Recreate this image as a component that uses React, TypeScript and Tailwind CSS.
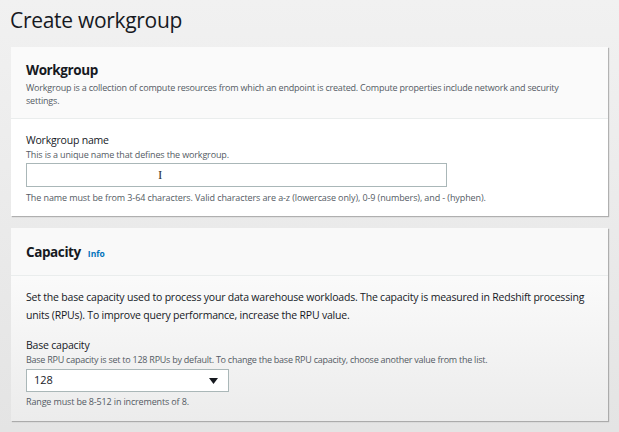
import React from "react";

const App: React.FC = () => {
  return (
    <div
      className="w-[619px] h-[432px] overflow-hidden bg-gradient-to-b from-[#f1f1f1] to-[#e4e4e4] text-[#16191f]"
      style={{ fontFamily: '"Open Sans", "Noto Sans", Arial, sans-serif' }}
    >
      {/* Page title */}
      <h1 className="pl-[10px] pt-[3px] h-[47px] text-[21px] tracking-[-0.3px] leading-[34px] text-[#16191f]">Create workgroup</h1>

      {/* Workgroup card */}
      <section className="ml-[11px] w-[597px] bg-white shadow-[1px_1px_1px_rgba(0,0,0,0.25)]">
        <div className="h-[72px] bg-[#fafafa] border-b border-[#eaeded] px-[15px] pt-[13px]">
          <h2 className="text-[13.5px] tracking-[-0.4px] font-bold leading-[20px]">Workgroup</h2>
          <p className="mt-[1px] pr-[30px] text-[9px] tracking-[-0.2px] leading-[13px] text-[#545b64]">
            Workgroup is a collection of compute resources from which an endpoint is created. Compute properties include network and security settings.
          </p>
        </div>
        <div className="h-[97px] px-[15px] pt-[14px]">
          <div className="text-[10.5px] tracking-[-0.2px] leading-[15px]">Workgroup name</div>
          <div className="text-[9px] tracking-[-0.15px] leading-[14px] text-[#545b64]">This is a unique name that defines the workgroup.</div>
          <div className="relative mt-[1px] w-[421px] h-[24px] border border-[#aab7b8] bg-white">
            <span
              className="absolute left-[131px] top-[3px] text-[13px] leading-[15px] text-[#333]"
              style={{ fontFamily: '"Liberation Serif", serif' }}
            >
              I
            </span>
          </div>
          <div className="mt-[4px] text-[9px] tracking-[-0.1px] leading-[14px] text-[#545b64]">
            The name must be from 3-64 characters. Valid characters are a-z (lowercase only), 0-9 (numbers), and - (hyphen).
          </div>
        </div>
      </section>

      {/* Capacity card */}
      <section className="mt-[12px] ml-[11px] w-[597px] bg-gradient-to-b from-white to-[#ececec] shadow-[1px_1px_1px_rgba(0,0,0,0.25)]">
        <div className="h-[48px] bg-[#f9f9f9] border-b border-[#eaeded] px-[15px] pt-[14px] flex items-baseline gap-[7px]">
          <h2 className="text-[13.5px] tracking-[-0.4px] font-bold leading-[20px]">Capacity</h2>
          <span className="text-[8.5px] font-bold text-[#0073bb]">Info</span>
        </div>
        <div className="h-[145px] px-[15px] pt-[12px]">
          <p className="text-[10.5px] tracking-[-0.2px] leading-[18px]">
            Set the base capacity used to process your data warehouse workloads. The capacity is measured in Redshift processing units (RPUs). To improve query performance, increase the RPU value.
          </p>
          <div className="mt-[14px] text-[10.5px] tracking-[-0.2px] leading-[15px]">Base capacity</div>
          <div className="text-[9px] tracking-[-0.25px] leading-[14px] text-[#545b64]">
            Base RPU capacity is set to 128 RPUs by default. To change the base RPU capacity, choose another value from the list.
          </div>
          <div className="mt-[2px] w-[203px] h-[23px] border border-[#aab7b8] bg-white flex items-center justify-between pl-[7px] pr-[10px]">
            <span className="text-[11px]">128</span>
            <svg width="9" height="6" viewBox="0 0 9 6">
              <path d="M0 0h9L4.5 6z" fill="#16191f" />
            </svg>
          </div>
          <div className="mt-[3px] text-[9px] tracking-[-0.15px] leading-[14px] text-[#545b64]">Range must be 8-512 in increments of 8.</div>
        </div>
      </section>
    </div>
  );
};

export default App;
